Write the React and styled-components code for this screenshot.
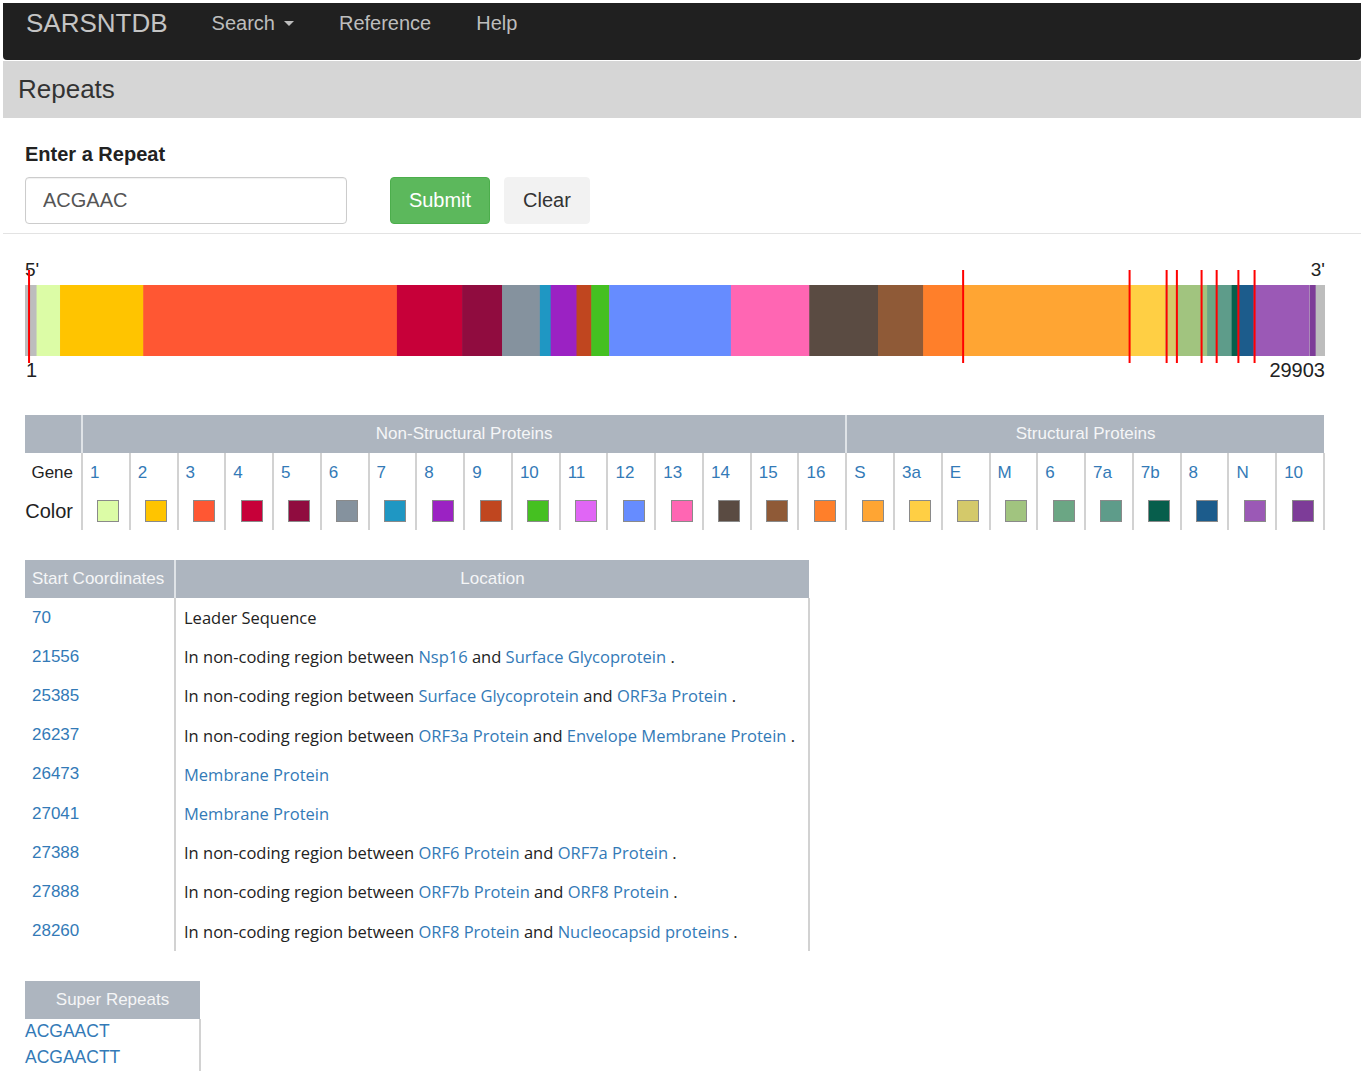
import React from "react";
import styled, { createGlobalStyle } from "styled-components";

const GENOME_LENGTH = 29903;
const BAR_WIDTH = 1300;

const GlobalStyle = createGlobalStyle`
  body {
    margin: 3px;
    font-family: "Liberation Sans", Arial, sans-serif;
    color: #333;
    background: #fff;
  }
  a {
    color: #337ab7;
    text-decoration: none;
  }
`;

const genes = [
  { label: "1", color: "#dcfca6", start: 266, end: 805, group: "ns" },
  { label: "2", color: "#ffc400", start: 806, end: 2719, group: "ns" },
  { label: "3", color: "#ff5733", start: 2720, end: 8554, group: "ns" },
  { label: "4", color: "#c70039", start: 8555, end: 10054, group: "ns" },
  { label: "5", color: "#900c3f", start: 10055, end: 10972, group: "ns" },
  { label: "6", color: "#85929e", start: 10973, end: 11842, group: "ns" },
  { label: "7", color: "#1f97c3", start: 11843, end: 12091, group: "ns" },
  { label: "8", color: "#9b22c3", start: 12092, end: 12685, group: "ns" },
  { label: "9", color: "#c0461f", start: 12686, end: 13024, group: "ns" },
  { label: "10", color: "#45c021", start: 13025, end: 13441, group: "ns" },
  { label: "11", color: "#e066f5", start: 13442, end: 13480, group: "ns" },
  { label: "12", color: "#668cff", start: 13442, end: 16236, group: "ns" },
  { label: "13", color: "#ff66b3", start: 16237, end: 18039, group: "ns" },
  { label: "14", color: "#5a4b42", start: 18040, end: 19620, group: "ns" },
  { label: "15", color: "#8f5a37", start: 19621, end: 20658, group: "ns" },
  { label: "16", color: "#ff7f2a", start: 20659, end: 21552, group: "ns" },
  { label: "S", color: "#ffa533", start: 21563, end: 25384, group: "s" },
  { label: "3a", color: "#ffcf44", start: 25393, end: 26220, group: "s" },
  { label: "E", color: "#d4c96a", start: 26221, end: 26472, group: "s" },
  { label: "M", color: "#a1c47f", start: 26473, end: 27191, group: "s" },
  { label: "6", color: "#6ba684", start: 27192, end: 27387, group: "s" },
  { label: "7a", color: "#5e9c8a", start: 27388, end: 27759, group: "s" },
  { label: "7b", color: "#075e4c", start: 27756, end: 27887, group: "s" },
  { label: "8", color: "#1c5c8c", start: 27888, end: 28259, group: "s" },
  { label: "N", color: "#9b59b6", start: 28260, end: 29533, group: "s" },
  { label: "10", color: "#7d3c98", start: 29558, end: 29674, group: "s" },
];

const results = [
  { pos: 70, text: "Leader Sequence" },
  { pos: 21556, between: ["Nsp16", "Surface Glycoprotein"] },
  { pos: 25385, between: ["Surface Glycoprotein", "ORF3a Protein"] },
  { pos: 26237, between: ["ORF3a Protein", "Envelope Membrane Protein"] },
  { pos: 26473, link: "Membrane Protein" },
  { pos: 27041, link: "Membrane Protein" },
  { pos: 27388, between: ["ORF6 Protein", "ORF7a Protein"] },
  { pos: 27888, between: ["ORF7b Protein", "ORF8 Protein"] },
  { pos: 28260, between: ["ORF8 Protein", "Nucleocapsid proteins"] },
];

const superRepeats = ["ACGAACT", "ACGAACTT"];

const toX = (pos) => (pos / GENOME_LENGTH) * BAR_WIDTH;

// ---- navbar ----
const Navbar = styled.nav`
  height: 57px;
  background: #202020;
  border-radius: 0 0 4px 4px;
  display: flex;
  align-items: flex-start;
  padding: 5px 0 0 23px;
  box-sizing: border-box;
`;

const Brand = styled.a`
  font-size: 26px;
  line-height: 30px;
  color: #c4c4c4;
  margin-right: 44px;
`;

const NavLink = styled.a`
  font-size: 20px;
  line-height: 30px;
  color: #bdbdbd;
  margin-right: 45px;
  display: flex;
  align-items: center;
`;

const Caret = styled.span`
  display: inline-block;
  margin-left: 9px;
  border-top: 5px solid #bdbdbd;
  border-left: 5px solid transparent;
  border-right: 5px solid transparent;
`;

const PageHeader = styled.header`
  height: 57px;
  margin-top: 1px;
  background: #d6d6d6;
  display: flex;
  align-items: center;
  padding-left: 15px;
  font-size: 26px;
  color: #333;
`;

// ---- form ----
const Form = styled.form`
  padding: 22px 0 9px 22px;
  border-bottom: 1px solid #e3e3e3;
`;

const Label = styled.div`
  font-size: 20px;
  font-weight: bold;
  line-height: 28px;
  color: #222;
  margin-bottom: 9px;
`;

const FormRow = styled.div`
  display: flex;
  align-items: center;
`;

const Input = styled.input`
  width: 322px;
  height: 47px;
  box-sizing: border-box;
  border: 1px solid #ccc;
  border-radius: 4px;
  padding: 0 17px;
  font-family: "Liberation Sans", Arial, sans-serif;
  font-size: 20px;
  color: #555;
  box-shadow: inset 0 1px 1px rgba(0, 0, 0, 0.06);
  outline: none;
`;

const Button = styled.button`
  height: 47px;
  box-sizing: border-box;
  border-radius: 4px;
  font-family: "Liberation Sans", Arial, sans-serif;
  font-size: 20px;
  padding: 0;
  width: ${(p) => (p.$primary ? "100px" : "86px")};
  margin-left: ${(p) => (p.$primary ? "43px" : "14px")};
  background: ${(p) => (p.$primary ? "#5cb85c" : "#f2f2f2")};
  color: ${(p) => (p.$primary ? "#fff" : "#333")};
  border: 1px solid ${(p) => (p.$primary ? "#4cae4c" : "#f2f2f2")};
`;

// ---- genome bar ----
const Genome = styled.div`
  margin: 25px 0 0 22px;
  width: ${BAR_WIDTH}px;
`;

const EndLabels = styled.div`
  display: flex;
  justify-content: space-between;
  font-size: ${(p) => (p.$bottom ? "20px" : "19px")};
  line-height: ${(p) => (p.$bottom ? "24px" : "22px")};
  margin: ${(p) => (p.$bottom ? "2px 0 0 0" : "0 0 4px 0")};
  padding-left: ${(p) => (p.$bottom ? "1px" : "0")};
  color: #222;
`;

const BarSvg = styled.svg`
  display: block;
  overflow: visible;
`;

// ---- tables ----
const LegendTable = styled.table`
  margin: 33px 0 0 22px;
  width: ${BAR_WIDTH}px;
  border-collapse: collapse;
  table-layout: fixed;
`;

const HeadCell = styled.th`
  background: #adb5bf;
  color: #f5f6f7;
  font-weight: normal;
  font-size: 17px;
  height: 38px;
  padding: 0 7px;
  text-align: ${(p) => p.$align || "center"};
  border-left: 2px solid #dfe3e7;
  &:first-child {
    border-left: none;
  }
  white-space: nowrap;
`;

const RowLabel = styled.td`
  font-size: ${(p) => (p.$big ? "20px" : "17px")};
  text-align: right;
  padding: 0 8px 0 0;
  height: ${(p) => (p.$big ? "38px" : "39px")};
  color: #222;
  border-right: ${(p) => (p.$big ? "none" : "2px solid #d2d2d2")};
`;

const GeneCell = styled.td`
  font-size: 17px;
  padding: 0 0 0 7px;
  border-left: 2px solid #d2d2d2;
  &:last-child {
    border-right: 2px solid #d2d2d2;
  }
`;

const SwatchCell = styled.td`
  border-left: 2px solid #d2d2d2;
  text-align: center;
  &:last-child {
    border-right: 2px solid #d2d2d2;
  }
`;

const Swatch = styled.span`
  display: inline-block;
  width: 22px;
  height: 22px;
  box-sizing: border-box;
  border: 1px solid #8a8a8a;
  background: ${(p) => p.$color};
  vertical-align: middle;
  margin-left: 5px;
`;

const ResultTable = styled.table`
  margin: 30px 0 0 22px;
  width: 785px;
  border-collapse: collapse;
  table-layout: fixed;
`;

const PosCell = styled.td`
  font-size: 17px;
  height: 39.2px;
  padding: 0 7px;
  border-right: 2px solid #d2d2d2;
`;

const LocCell = styled.td`
  font-family: "Open Sans", "Liberation Sans", sans-serif;
  font-size: 16.5px;
  color: #222;
  padding: 0 8px;
  white-space: nowrap;
  border-right: 2px solid #d2d2d2;
`;

const SuperTable = styled.table`
  margin: 30px 0 0 22px;
  width: 176px;
  border-collapse: collapse;
`;

const SuperCell = styled.td`
  font-size: 17.5px;
  height: 26px;
  padding: 0;
  border-right: 2px solid #d2d2d2;
`;

function Location({ row }) {
  if (row.text) return row.text;
  if (row.link) return <a href="#">{row.link}</a>;
  return (
    <>
      In non-coding region between <a href="#">{row.between[0]}</a> and{" "}
      <a href="#">{row.between[1]}</a> .
    </>
  );
}

export default function App() {
  const ns = genes.filter((g) => g.group === "ns");
  const st = genes.filter((g) => g.group === "s");

  return (
    <>
      <GlobalStyle />
      <Navbar>
        <Brand href="#">SARSNTDB</Brand>
        <NavLink href="#">
          Search <Caret />
        </NavLink>
        <NavLink href="#">Reference</NavLink>
        <NavLink href="#">Help</NavLink>
      </Navbar>
      <PageHeader>Repeats</PageHeader>

      <Form onSubmit={(e) => e.preventDefault()}>
        <Label>Enter a Repeat</Label>
        <FormRow>
          <Input defaultValue="ACGAAC" />
          <Button $primary type="submit">
            Submit
          </Button>
          <Button type="button">Clear</Button>
        </FormRow>
      </Form>

      <Genome>
        <EndLabels>
          <span>5'</span>
          <span>3'</span>
        </EndLabels>
        <BarSvg width={BAR_WIDTH} height={71}>
          <rect x={0} y={0} width={BAR_WIDTH} height={71} fill="#bdbdbd" />
          {genes.map((g) => (
            <rect
              key={g.group + g.label}
              x={toX(g.start)}
              y={0}
              width={toX(g.end) - toX(g.start) + 0.6}
              height={71}
              fill={g.color}
            />
          ))}
          {results.map((r) => (
            <rect
              key={r.pos}
              x={toX(r.pos)}
              y={-15}
              width={2}
              height={93}
              fill="#ff0000"
            />
          ))}
        </BarSvg>
        <EndLabels $bottom>
          <span>1</span>
          <span>29903</span>
        </EndLabels>
      </Genome>

      <LegendTable>
        <colgroup>
          <col style={{ width: 57 }} />
          {genes.map((g) => (
            <col key={g.group + g.label} />
          ))}
        </colgroup>
        <thead>
          <tr>
            <HeadCell />
            <HeadCell colSpan={ns.length}>Non-Structural Proteins</HeadCell>
            <HeadCell colSpan={st.length}>Structural Proteins</HeadCell>
          </tr>
        </thead>
        <tbody>
          <tr>
            <RowLabel>Gene</RowLabel>
            {genes.map((g) => (
              <GeneCell key={g.group + g.label}>
                <a href="#">{g.label}</a>
              </GeneCell>
            ))}
          </tr>
          <tr>
            <RowLabel $big>Color</RowLabel>
            {genes.map((g) => (
              <SwatchCell key={g.group + g.label}>
                <Swatch $color={g.color} />
              </SwatchCell>
            ))}
          </tr>
        </tbody>
      </LegendTable>

      <ResultTable>
        <colgroup>
          <col style={{ width: 150 }} />
          <col />
        </colgroup>
        <thead>
          <tr>
            <HeadCell $align="left">Start Coordinates</HeadCell>
            <HeadCell>Location</HeadCell>
          </tr>
        </thead>
        <tbody>
          {results.map((r) => (
            <tr key={r.pos}>
              <PosCell>
                <a href="#">{r.pos}</a>
              </PosCell>
              <LocCell>
                <Location row={r} />
              </LocCell>
            </tr>
          ))}
        </tbody>
      </ResultTable>

      <SuperTable>
        <thead>
          <tr>
            <HeadCell>Super Repeats</HeadCell>
          </tr>
        </thead>
        <tbody>
          {superRepeats.map((s) => (
            <tr key={s}>
              <SuperCell>
                <a href="#">{s}</a>
              </SuperCell>
            </tr>
          ))}
        </tbody>
      </SuperTable>
    </>
  );
}
